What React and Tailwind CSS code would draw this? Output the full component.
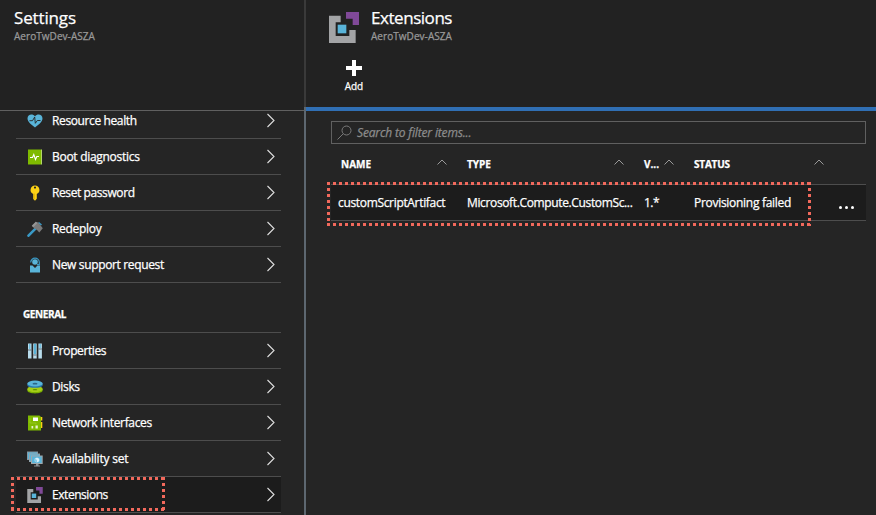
import React from "react";

function ExtensionsIcon({ className }) {
  return (
    <svg className={className} viewBox="0 0 90 93">
      <path d="M0 11H35V31H20V72H61V54H80V93H0Z" fill="#a3a4a6" />
      <path d="M51 0H90V39H71V20H51Z" fill="#804998" />
      <path d="M26 38H52V64H26Z" fill="#59b4d9" />
    </svg>
  );
}

const Icon = ({ children }) => (
  <svg className="h-4 w-4 shrink-0" viewBox="0 0 16 16">
    {children}
  </svg>
);

const icons = {
  health: (
    <Icon>
      <path d="M8 14.500C5 12 .5 9 .5 5.500C.5 1 6 .5 8 3.500C10 .5 15.500 1 15.500 5.500C15.500 9 11 12 8 14.500Z" fill="#59b4d9" />
      <path d="M2.500 7.700H5.500L7.700 4L8.300 10.300L10.300 7.500H13.500" fill="none" stroke="#252525" strokeWidth=".9" />
    </Icon>
  ),
  boot: (
    <Icon>
      <path d="M1 .5H14V15.500H1Z" fill="#7fba00" />
      <path d="M14 .5H15V15.500H14Z" fill="#b5d56b" />
      <path d="M3 8.500H5.500L6.800 5.500L8.500 10.500L9.800 7.500H12" fill="none" stroke="#fff" strokeWidth="1.100" />
    </Icon>
  ),
  key: (
    <Icon>
      <path fillRule="evenodd" d="M8 .5A4.500 4.400 0 0 1 9.800 8.900V13.700L8 15.700L6.200 13.900V8.900A4.500 4.400 0 0 1 8 .5ZM8 1.500A1.100 1.100 0 1 0 8 3.700A1.100 1.100 0 1 0 8 1.500Z" fill="#fcd116" />
      <path d="M7.300 8.500V14" stroke="#d9a800" strokeWidth=".7" />
    </Icon>
  ),
  hammer: (
    <Icon>
      <path d="M1.500 14.700L8.500 7.700" stroke="#3999c6" strokeWidth="2.600" strokeLinecap="round" />
      <path d="M11.500 1.500L14.500 4" stroke="#3999c6" strokeWidth="1.600" />
      <path d="M4.800 4.800L8.800 .8L11.300 1.600L15.800 7.300L12.300 11.500L9.800 8.800L7.200 7.300Z" fill="#7a7a7a" />
      <path d="M4.800 4.800L8.800 .8L10.300 2.200L6.300 6.300Z" fill="#949494" />
    </Icon>
  ),
  support: (
    <Icon>
      <path d="M3.700 5.500A4.300 4.300 0 0 1 12.300 5.500V7.700H10" fill="none" stroke="#3999c6" strokeWidth="1.200" />
      <circle cx="8" cy="5" r="2.800" fill="#59b4d9" />
      <path d="M3 8.500H5.500L8 11L10.500 8.500H13V15.500H3Z" fill="#59b4d9" />
    </Icon>
  ),
  properties: (
    <Icon>
      <path d="M1 .5H4.500V15.500H1ZM6.200 .5H9.700V15.500H6.200ZM11.400 .5H14.900V15.500H11.400Z" fill="#b8dcec" />
      <path d="M2.200 1V6H3.300V1ZM7 1V11H9V1ZM12.600 1V5H13.700V1Z" fill="#59b4d9" />
      <path d="M1 7H4.500M6.200 12H9.700M11.400 6H14.900" stroke="#68727a" strokeWidth="1" />
    </Icon>
  ),
  disks: (
    <Icon>
      <path d="M.3 10V11.300C.3 15.500 15.700 15.500 15.700 11.300V10Z" fill="#7aae00" />
      <ellipse cx="8" cy="10" rx="7.700" ry="3.100" fill="#a5ce16" />
      <path d="M.3 4.500V6C.3 9.800 15.700 9.800 15.700 6V4.500Z" fill="#2878aa" />
      <ellipse cx="8" cy="4.500" rx="7.700" ry="3" fill="#59b4d9" />
      <ellipse cx="8" cy="4.700" rx="2.500" ry=".9" fill="#2d6687" />
      <ellipse cx="8" cy="10.700" rx="2.300" ry=".6" fill="#5d8e00" />
    </Icon>
  ),
  network: (
    <Icon>
      <path d="M1 .5H12.500L14 2V15.500H1Z" fill="#7fba00" />
      <path d="M14 2H15.300V5.500H14ZM14 7H15.300V13H14Z" fill="#fcd116" />
      <path d="M6 2.500H11V6H6Z" fill="#fff" />
      <path d="M4.500 11H6.200V13.500H4.500ZM8.500 10.500H10.800V13.500H8.500Z" fill="#e8f3cf" />
      <path d="M3 3V8H9V9.500" fill="none" stroke="#a5ce32" strokeWidth=".6" />
    </Icon>
  ),
  availability: (
    <Icon>
      <path d="M0 .5H11V9H0Z" fill="#8698a2" />
      <path d="M1 1.500H10V8H1Z" fill="#59b4d9" />
      <path d="M2 2.500H13V11H2Z" fill="#94a5ad" />
      <path d="M3 3.500H12V10H3Z" fill="#59b4d9" />
      <path d="M4 4.500H15.700V13H4Z" fill="#a0a8ac" />
      <path d="M5 5.500H14.700V12H5Z" fill="#59b4d9" />
      <path d="M10 6.500L12.300 7.700V10.300L10 11.500L7.700 10.300V7.700Z" fill="#d8f0fa" />
      <path d="M10 9V11.500L7.700 10.300V7.700Z" fill="#8bcce8" />
      <path d="M9 13H11.500V14.500H13V15.500H7V14.500H9Z" fill="#8b9296" />
    </Icon>
  ),
  extensions: <ExtensionsIcon className="h-4 w-4 shrink-0" />,
};

const support = [
  ["health", "Resource health", "tracking-[-0.38px]"],
  ["boot", "Boot diagnostics", "tracking-[-0.29px]"],
  ["key", "Reset password", "tracking-[-0.4px]"],
  ["hammer", "Redeploy", "tracking-[-0.3px]"],
  ["support", "New support request", "tracking-[-0.35px]"],
];

const general = [
  ["properties", "Properties", "tracking-[-0.4px]"],
  ["disks", "Disks", "tracking-[-0.35px]"],
  ["network", "Network interfaces", "tracking-[-0.35px]"],
  ["availability", "Availability set", "tracking-[-0.2px]"],
  ["extensions", "Extensions", "tracking-[-0.45px]"],
];

function MenuItem({ icon, label, tracking, selected }) {
  return (
    <li className={`flex h-9 shrink-0 items-center border-b border-[#4d4d4d] pr-[6px] pl-[11px] ${selected ? "bg-[#1c1c1c]" : ""}`}>
      {icons[icon]}
      <span className={`ml-[9px] flex-1 whitespace-nowrap ${tracking}`}>{label}</span>
      <svg className="mb-px h-[15px] w-[9px]" viewBox="0 0 9 15" fill="none" stroke="#dedede" strokeWidth="1.1">
        <path d="M1.500 1L8 7.500L1.500 14" />
      </svg>
    </li>
  );
}

function Menu({ items, selected }) {
  return (
    <ul className="flex flex-col">
      {items.map(([icon, label, tracking]) => (
        <MenuItem key={icon} icon={icon} label={label} tracking={tracking} selected={icon === selected} />
      ))}
    </ul>
  );
}

function Highlight({ className }) {
  const across = "absolute inset-x-0 h-[3px] bg-[repeating-linear-gradient(90deg,#f2695c_0_3px,transparent_3px_6px)]";
  const down = "absolute inset-y-0 w-[3px] bg-[repeating-linear-gradient(180deg,#f2695c_0_3px,transparent_3px_6px)]";
  return (
    <div className={`pointer-events-none absolute ${className}`}>
      <span className={`${across} top-0`} />
      <span className={`${across} bottom-0`} />
      <span className={`${down} left-0`} />
      <span className={`${down} right-0`} />
    </div>
  );
}

const Sort = () => (
  <svg className="mb-[5px] h-[6px] w-[10px] shrink-0" viewBox="0 0 10 6" fill="none" stroke="#9a9a9a" strokeWidth="1">
    <path d="M.5 5.500L5 1L9.500 5.500" />
  </svg>
);

const Titles = ({ title, tracking }) => (
  <div>
    <h1 className={`text-[17px] leading-[22px] ${tracking}`}>{title}</h1>
    <p className="text-[10px] leading-[15px] tracking-[0.05px] text-[#999]">AeroTwDev-ASZA</p>
  </div>
);

export default function App() {
  return (
    <div className="relative flex h-[515px] w-[876px] overflow-hidden bg-[#252525] font-['Open_Sans','Noto_Sans',sans-serif] text-[12px] text-white [-webkit-text-stroke:0.25px_currentColor]">
      <aside className="flex w-[304px] shrink-0 flex-col">
        <header className="h-[111px] shrink-0 border-b border-[#606060] bg-[#222] pt-[7px] pl-[14px]">
          <Titles title="Settings" tracking="tracking-[-0.15px]" />
        </header>
        <div className="flex min-h-0 flex-1 flex-col overflow-hidden pr-[23px] pl-4">
          <div className="-mt-2">
            <Menu items={support} selected="" />
          </div>
          <h2 className="flex h-[50px] shrink-0 items-center border-b border-[#4d4d4d] pt-[14px] pl-[7px] text-[10px] font-bold tracking-[-0.4px]">GENERAL</h2>
          <Menu items={general} selected="extensions" />
        </div>
      </aside>

      <div className="flex w-[2px] shrink-0 flex-col">
        <span className="h-[107px] bg-[#3a3a3a]" />
        <span className="flex-1 bg-[#5d6770]" />
      </div>

      <main className="flex min-w-0 flex-1 flex-col">
        <header className="flex h-[111px] shrink-0 flex-col border-b-4 border-[#306fb4] bg-[#222]">
          <div className="flex pt-[7px] pl-[23px]">
            <ExtensionsIcon className="mt-[5px] mr-3 h-[31px] w-[30px]" />
            <Titles title="Extensions" tracking="tracking-[-0.45px]" />
          </div>
          <button className="mt-4 ml-[35px] flex w-[26px] flex-col items-center">
            <svg className="h-4 w-4" viewBox="0 0 16 16" fill="#fff">
              <path d="M6 0H10V6H16V10H10V16H6V10H0V6H6Z" />
            </svg>
            <span className="mt-[3px] text-[10px] leading-[14px] tracking-[-0.05px]">Add</span>
          </button>
        </header>

        <section className="flex flex-col pt-[10px] pr-[10px] pl-[25px]">
          <div className="flex h-[23px] items-center border border-[#606060] pl-[5px]">
            <svg className="h-[15px] w-[15px]" viewBox="0 0 15 15" fill="none" stroke="#7a7a7a" strokeWidth="1">
              <circle cx="9.500" cy="5.500" r="4.500" />
              <path d="M6.300 8.700L.5 14.500" />
            </svg>
            <span className="ml-[5px] text-[12px] tracking-[-0.15px] text-[#8c8c8c] italic">Search to filter items...</span>
          </div>

          <div className="grid h-10 grid-cols-[126px_177px_50px_150px_1fr] items-center text-[10px] font-bold">
            <div className="flex items-center justify-between pr-[10px] pl-[10px]"><span>NAME</span><Sort /></div>
            <div className="flex items-center justify-between pr-[10px] pl-[10px]"><span>TYPE</span><Sort /></div>
            <div className="flex items-center justify-between pr-[10px] pl-[10px]"><span>V...</span><Sort /></div>
            <div className="flex items-center justify-between pr-[14px] pl-[10px]"><span className="tracking-[-0.2px]">STATUS</span></div>
            <div className="-ml-5 flex items-center"><Sort /></div>
          </div>

          <div className="grid h-[37px] grid-cols-[136px_177px_50px_145px_1fr] items-center border-y border-[#4d4d4d] bg-[#1c1c1c] whitespace-nowrap">
            <span className="pl-[7px] tracking-[-0.33px]">customScriptArtifact</span>
            <span className="tracking-[-0.36px]">Microsoft.Compute.CustomSc...</span>
            <span className="tracking-[-0.5px]">1.*</span>
            <span className="tracking-[-0.29px]">Provisioning failed</span>
            <svg className="mt-[10px] h-[3px] w-[15px]" viewBox="0 0 15 3" fill="#fff">
              <circle cx="1.500" cy="1.500" r="1.500" />
              <circle cx="7.500" cy="1.500" r="1.500" />
              <circle cx="13.500" cy="1.500" r="1.500" />
            </svg>
          </div>
        </section>
      </main>

      <Highlight className="top-[182px] left-[327px] h-[44px] w-[484px]" />
      <Highlight className="top-[477px] left-[11px] h-[34px] w-[154px]" />
    </div>
  );
}
